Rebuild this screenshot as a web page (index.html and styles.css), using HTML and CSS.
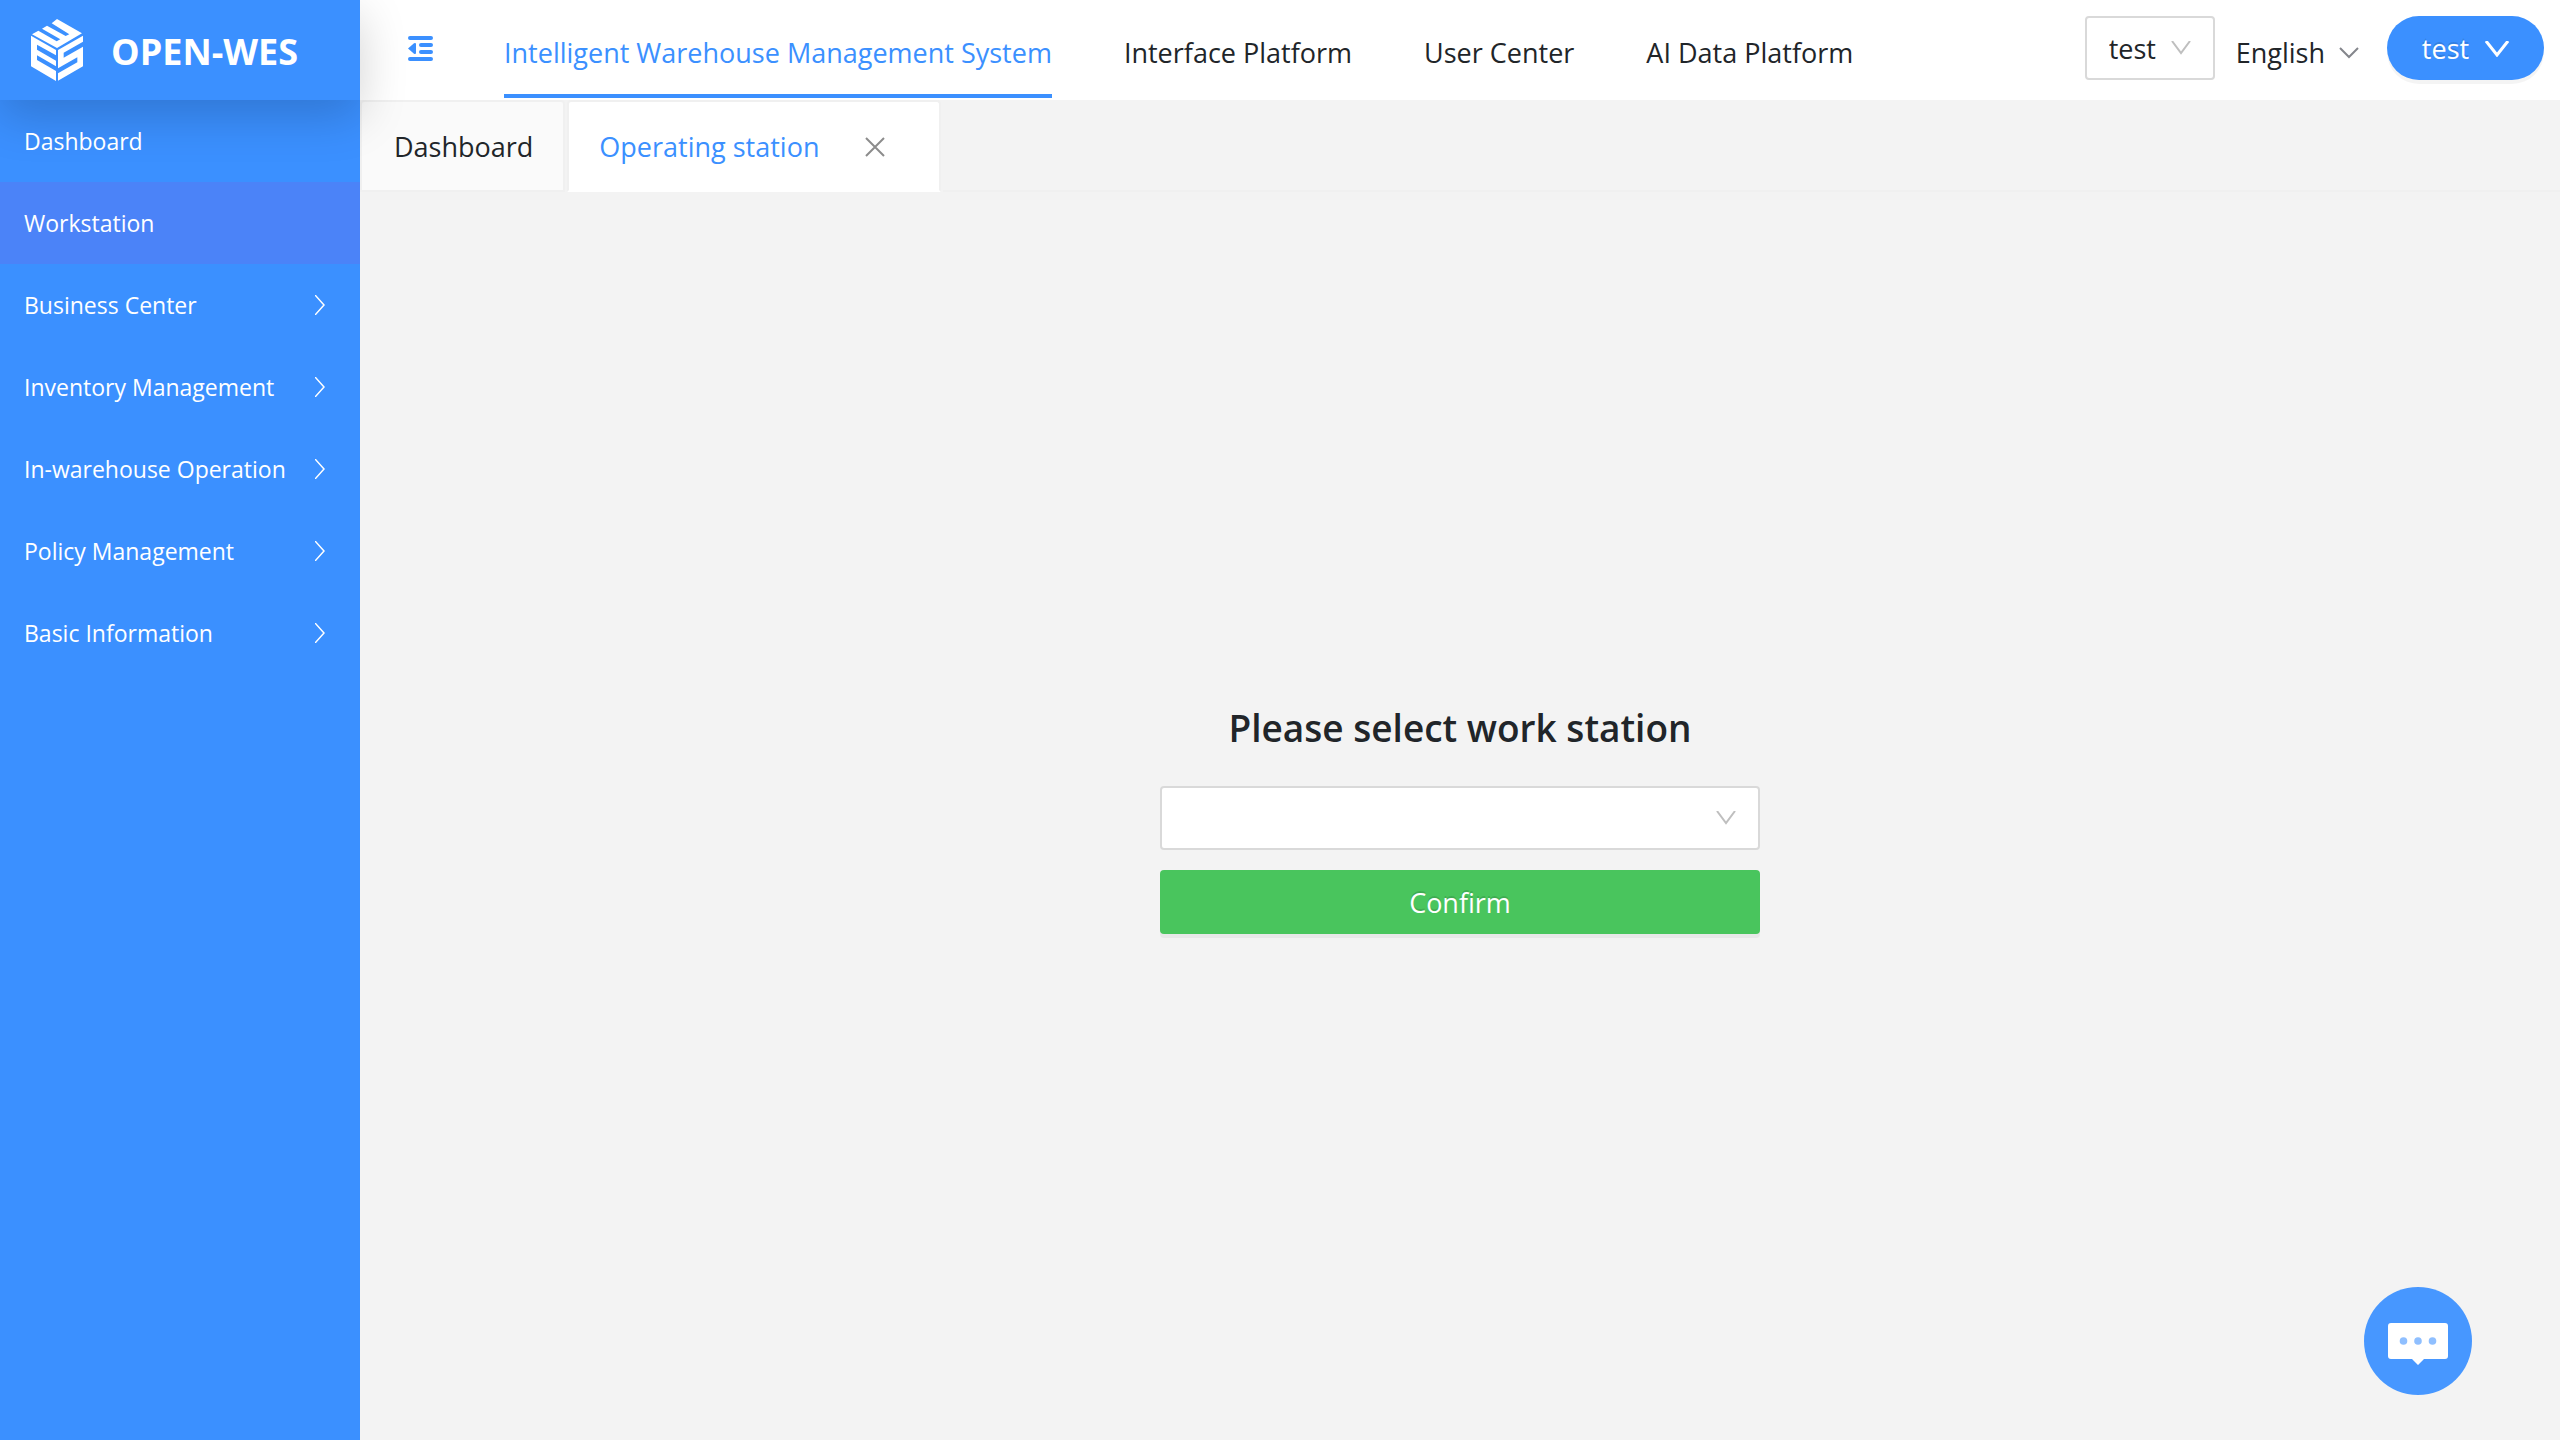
FILE: index.html
```html
<!DOCTYPE html>
<html lang="en">
<head>
<meta charset="utf-8">
<title>OPEN-WES</title>
<meta name="viewport" content="width=device-width, initial-scale=1">
<link rel="stylesheet" href="styles.css">
</head>
<body>
<div class="app">
  <aside class="sidebar">
    <a class="brand" href="#">
      <svg class="brand-logo" viewBox="0 0 156 186" aria-hidden="true">
        <g fill="#fff">
          <path d="M0 50 75 93V109L18 77V92L75 125V142L18 109V123L75 156V186L0 142Z"/>
          <path d="M81 93 156 50V68L98 101V116L156 83V142L81 185V163L139 130V115L81 148Z"/>
          <path d="M3 46 22 35 77 67 88 61 33 29 48 20 104 51 115 46 62 13 78 0 153 43 78 87Z"/>
        </g>
      </svg>
      <span class="brand-name">OPEN-WES</span>
    </a>
    <nav class="menu" aria-label="Main">
      <a class="menu-item" href="#">Dashboard</a>
      <a class="menu-item menu-item-active" href="#">Workstation</a>
      <a class="menu-item" href="#">Business Center<svg class="menu-arrow" viewBox="0 0 10 20"><path d="M0 0 9 10 0 20"/></svg></a>
      <a class="menu-item" href="#">Inventory Management<svg class="menu-arrow" viewBox="0 0 10 20"><path d="M0 0 9 10 0 20"/></svg></a>
      <a class="menu-item" href="#">In-warehouse Operation<svg class="menu-arrow" viewBox="0 0 10 20"><path d="M0 0 9 10 0 20"/></svg></a>
      <a class="menu-item" href="#">Policy Management<svg class="menu-arrow" viewBox="0 0 10 20"><path d="M0 0 9 10 0 20"/></svg></a>
      <a class="menu-item" href="#">Basic Information<svg class="menu-arrow" viewBox="0 0 10 20"><path d="M0 0 9 10 0 20"/></svg></a>
    </nav>
  </aside>
  <div class="content">
    <header class="topbar">
      <button class="collapse" type="button" aria-label="Collapse menu">
        <svg viewBox="0 0 26 26"><path d="M2 2H23M13 9H23M13 16H23M2 23H23" fill="none" stroke="#3b90ff" stroke-width="4" stroke-linecap="round"/><path d="M0 12.500 6 7.200Q8 6.500 8 8V17Q8 18.500 6 17.800Z" fill="#3b90ff"/></svg>
      </button>
      <nav class="systems" aria-label="Systems">
        <a class="system system-active" href="#">Intelligent Warehouse Management System</a>
        <a class="system" href="#">Interface Platform</a>
        <a class="system" href="#">User Center</a>
        <a class="system" href="#">AI Data Platform</a>
      </nav>
      <div class="tools">
        <div class="picker picker-small">
          <select aria-label="Warehouse"><option>test</option></select>
          <svg class="chevron" viewBox="0 0 20 14"><path d="M1 0 10 12 19 0"/></svg>
        </div>
        <button class="language" type="button">English<svg class="chevron" viewBox="0 0 20 14"><path d="M1 2 10 11 19 2"/></svg></button>
        <button class="account" type="button">test<svg class="chevron" viewBox="0 0 24 16"><path d="M1 0 12 14 23 0"/></svg></button>
      </div>
    </header>
    <div class="tabs">
      <a class="tab" href="#">Dashboard</a>
      <div class="tab tab-active">
        <a href="#">Operating station</a>
        <button class="tab-close" type="button" aria-label="Close tab"><svg viewBox="0 0 20 20"><path d="M1 1 19 19M19 1 1 19"/></svg></button>
      </div>
      <div class="tabs-rest"></div>
    </div>
    <main class="main">
      <form class="station">
        <label class="station-title" for="station">Please select work station</label>
        <div class="picker">
          <select id="station"><option></option></select>
          <svg class="chevron" viewBox="0 0 20 14"><path d="M1 0 10 12 19 0"/></svg>
        </div>
        <button class="confirm" type="button">Confirm</button>
      </form>
    </main>
  </div>
  <button class="chat" type="button" aria-label="Messages">
    <svg viewBox="0 0 60 42"><path d="M3 0H57Q60 0 60 3V33Q60 36 57 36H36L30 42 24 36H3Q0 36 0 33V3Q0 0 3 0Z" fill="#fff"/><g fill="#8fbfff"><circle cx="15.500" cy="18" r="3.800"/><circle cx="30" cy="18" r="3.800"/><circle cx="44.500" cy="18" r="3.800"/></g></svg>
  </button>
</div>
</body>
</html>
```
FILE: styles.css
```css
* { box-sizing: border-box; }
body {
  margin: 0;
  font-family: "Segoe UI", "Open Sans", "Noto Sans", sans-serif;
  font-size: 27px;
  line-height: 44px;
  color: #212529;
}
a { color: inherit; text-decoration: none; }
button, select { font: inherit; color: inherit; margin: 0; border: 0; background: none; padding: 0; cursor: pointer; }
svg { display: block; flex: none; }

.app { display: flex; min-height: 100vh; background: #f3f3f3; }

.sidebar { position: relative; z-index: 1; flex: none; width: 360px; background: #3b90ff; color: #fff; }
.brand {
  display: flex; align-items: center; gap: 28px;
  height: 100px; padding-left: 31px;
  background: #3b90ff;
  box-shadow: 0 16px 48px rgba(0, 0, 0, .18);
}
.brand-logo { width: 52px; height: 62px; }
.brand-name { font-size: 36px; font-weight: 700; padding-top: 4px; }
.menu-item {
  display: flex; align-items: center; justify-content: space-between;
  height: 82px; padding: 0 35px 0 24px;
  font-size: 23px;
}
.menu-item-active { background: #4b83f8; }
.menu-arrow { width: 10px; height: 20px; fill: none; stroke: #fff; stroke-width: 1.500; }

.content { flex: 1; min-width: 0; display: flex; flex-direction: column; }
.topbar { display: flex; height: 100px; padding: 0 16px 0 48px; background: #fff; }
.collapse { width: 26px; height: 26px; margin: 36px 70px 0 0; }
.systems { display: flex; gap: 72px; flex: 1; }
.system { height: 98px; padding-top: 31px; white-space: nowrap; }
.system-active { color: #3b90ff; border-bottom: 4px solid #3b90ff; }
.tools { display: flex; align-items: center; height: 96px; }
.picker { position: relative; height: 64px; border: 2px solid #d9d9d9; border-radius: 4px; background: #fff; }
.picker select { appearance: none; width: 100%; height: 100%; padding: 2px 22px 0; }
.picker .chevron { position: absolute; right: 22px; top: 23px; pointer-events: none; stroke: #bfbfbf; }
.picker-small { width: 130px; }
.chevron { width: 20px; height: 14px; fill: none; stroke: #84868c; stroke-width: 2; }
.language { display: flex; align-items: center; gap: 14px; padding: 10px 28px 0 21px; }
.account {
  display: flex; align-items: center; justify-content: center; gap: 16px;
  width: 157px; height: 64px; padding-top: 2px; border-radius: 32px;
  background: #3b90ff; color: #fff; text-shadow: 0 -2px 0 rgba(0, 0, 0, .12);
  box-shadow: 0 4px 0 rgba(0, 0, 0, .045);
}
.account .chevron { width: 24px; height: 16px; stroke: #fff; stroke-width: 3; }

.tabs { display: flex; gap: 2px; height: 92px; }
.tab { border: 2px solid #f0f0f0; border-radius: 4px 4px 0 0; background: #fafafa; padding: 23px 30px 0 32px; white-space: nowrap; }
.tab-active { display: flex; align-items: center; background: #fff; border-bottom-color: #fff; color: #3b90ff; padding: 2px 54px 0 30px; }
.tab-close { margin-left: 46px; }
.tab-close svg { width: 20px; height: 20px; stroke: #8c8c8c; stroke-width: 2; }
.tabs-rest { flex: 1; border-bottom: 2px solid #f0f0f0; }

.main { flex: 1; display: flex; justify-content: center; padding-top: 508px; }
.station { display: flex; flex-direction: column; width: 600px; }
.station-title { font-size: 37px; font-weight: 600; line-height: 56px; text-align: center; margin-bottom: 30px; }
.confirm {
  height: 64px; margin-top: 20px; padding-top: 2px; border-radius: 4px;
  background: #49c55d; color: #fff; text-shadow: 0 -2px 0 rgba(0, 0, 0, .12);
  box-shadow: 0 4px 0 rgba(0, 0, 0, .045);
}
.chat {
  position: fixed; right: 88px; bottom: 45px;
  display: flex; justify-content: center; align-items: center;
  width: 108px; height: 108px; padding-top: 6px; border-radius: 50%;
  background: #4797ff;
}
.chat svg { width: 60px; height: 42px; }
```
